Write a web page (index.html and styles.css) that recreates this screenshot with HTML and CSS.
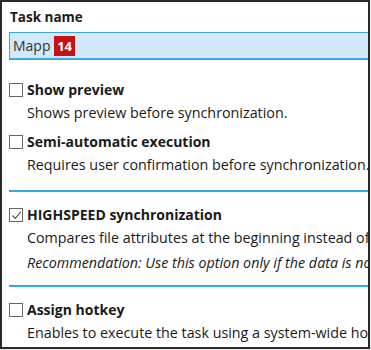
FILE: index.html
```html
<!DOCTYPE html>
<html lang="en">
<head>
    <meta charset="UTF-8">
    <title>Task settings</title>
    <link rel="stylesheet" href="styles.css">
</head>
<body>
    <div class="frame">
        <div class="field-label">Task name</div>
        <div class="name-input">
            Mapp <span class="badge">14</span>
        </div>

        <div class="option first">
            <div class="option-head">
                <span class="check"></span>
                <span class="option-title">Show preview</span>
            </div>
            <div class="option-desc">Shows preview before synchronization.</div>
        </div>
        <div class="option">
            <div class="option-head">
                <span class="check"></span>
                <span class="option-title">Semi-automatic execution</span>
            </div>
            <div class="option-desc">Requires user confirmation before synchronization.</div>
        </div>

        <div class="separator"></div>

        <div class="option after-sep">
            <div class="option-head">
                <span class="check checked">
                    <svg width="11" height="11" viewBox="0 0 11 11"><path d="M1.5 5.5 L4.3 8.3 L9.8 1.8" fill="none" stroke="#555" stroke-width="1.2"/></svg>
                </span>
                <span class="option-title">HIGHSPEED synchronization</span>
            </div>
            <div class="option-desc">Compares file attributes at the beginning instead of the content.</div>
            <div class="option-desc note">Recommendation: Use this option only if the data is not modified elsewhere.</div>
        </div>

        <div class="separator sep-short"></div>

        <div class="option after-sep">
            <div class="option-head">
                <span class="check"></span>
                <span class="option-title">Assign hotkey</span>
            </div>
            <div class="option-desc">Enables to execute the task using a system-wide hotkey.</div>
        </div>
    </div>
</body>
</html>
```

FILE: styles.css
```css
body {
    margin: 0;
    background: #ececec;
    font-family: "Open Sans", "Noto Sans", sans-serif;
    color: #1a1a1a;
}
.frame {
    width: 370px;
    height: 349px;
    box-sizing: border-box;
    border: 2px solid #2a2a2a;
    background: white;
    overflow: hidden;
    white-space: nowrap;
    padding-left: 7px;
}
.field-label {
    font-size: 13.5px;
    font-weight: bold;
    line-height: 20px;
    margin-top: 5px;
    padding-left: 1px;
}
.name-input {
    margin-top: 5px;
    height: 25px;
    background: #d2e9fc;
    border: 1px solid #3aa7e3;
    border-bottom-width: 2px;
    border-right: none;
    font-size: 14px;
    line-height: 25px;
    padding-left: 3px;
    color: #333;
}
.badge {
    background: #c8101a;
    color: white;
    font-weight: bold;
    font-size: 13px;
    padding: 1px 3px;
}
.option {
    margin-top: 9px;
}
.option.first {
    margin-top: 20px;
}
.option.after-sep {
    margin-top: 13px;
}
.option-head {
    display: flex;
    align-items: center;
    gap: 4px;
    height: 20px;
}
.check {
    width: 12px;
    height: 12px;
    border: 1px solid #666;
    display: flex;
    align-items: center;
    justify-content: center;
}
.option-title {
    font-size: 14px;
    font-weight: bold;
    line-height: 20px;
}
.option-desc {
    font-size: 14.3px;
    line-height: 20px;
    margin-top: 3px;
    padding-left: 18px;
}
.note {
    font-style: italic;
    margin-top: 5px;
}
.separator {
    height: 2px;
    background: #3aa7e3;
    margin-top: 15px;
}
.separator.sep-short {
    margin-top: 12px;
}
```
